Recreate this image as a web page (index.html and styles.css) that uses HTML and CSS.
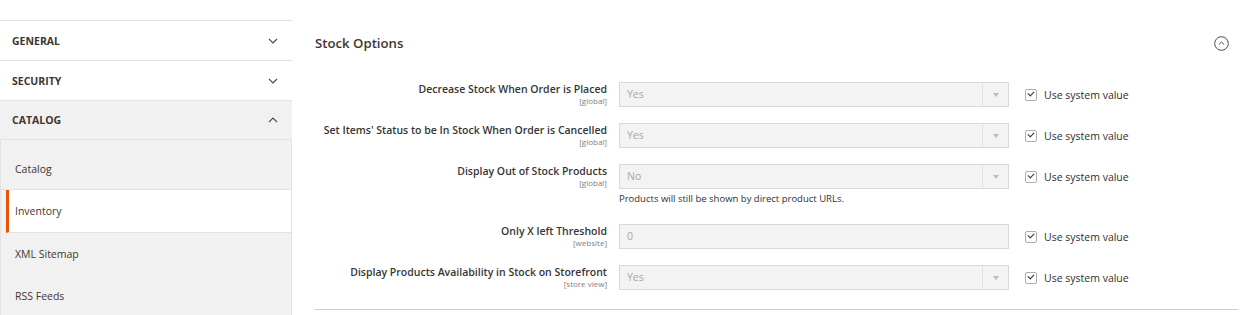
FILE: index.html
```html
<!DOCTYPE html>
<html lang="en">
<head>
  <meta charset="UTF-8">
  <meta name="viewport" content="width=device-width, initial-scale=1.0">
  <title>Configuration - Inventory</title>
  <link rel="stylesheet" href="styles.css">
</head>
<body>

<div class="page">
  <!-- Config tabs -->
  <div class="sidebar">
    <div class="tab">
      <span>General</span>
      <svg class="chev" width="10" height="6" viewBox="0 0 10 6"><polyline points="1,1 5,5 9,1"/></svg>
    </div>
    <div class="tab">
      <span>Security</span>
      <svg class="chev" width="10" height="6" viewBox="0 0 10 6"><polyline points="1,1 5,5 9,1"/></svg>
    </div>
    <div class="tab open">
      <span>Catalog</span>
      <svg class="chev" width="10" height="6" viewBox="0 0 10 6"><polyline points="1,5 5,1 9,5"/></svg>
    </div>
    <ul class="subnav">
      <li class="first">Catalog</li>
      <li class="active">Inventory</li>
      <li>XML Sitemap</li>
      <li>RSS Feeds</li>
    </ul>
  </div>

  <!-- Section content -->
  <div class="main">
    <div class="section-head">
      <span class="section-title">Stock Options</span>
      <svg class="collapse" width="15" height="15" viewBox="0 0 15 15">
        <circle cx="7.5" cy="7.5" r="6.8"/>
        <polyline points="4.8,8.6 7.5,6 10.2,8.6"/>
      </svg>
    </div>

    <div class="fields">
      <div class="row">
        <div class="label">Decrease Stock When Order is Placed<span class="scope">[global]</span></div>
        <div class="control"><div class="select">Yes<span class="arrow"></span></div></div>
        <label class="inherit"><span class="check"></span>Use system value</label>
      </div>

      <div class="row">
        <div class="label">Set Items' Status to be In Stock When Order is Cancelled<span class="scope">[global]</span></div>
        <div class="control"><div class="select">Yes<span class="arrow"></span></div></div>
        <label class="inherit"><span class="check"></span>Use system value</label>
      </div>

      <div class="row">
        <div class="label">Display Out of Stock Products<span class="scope">[global]</span></div>
        <div class="control">
          <div class="select">No<span class="arrow"></span></div>
          <div class="note">Products will still be shown by direct product URLs.</div>
        </div>
        <label class="inherit"><span class="check"></span>Use system value</label>
      </div>

      <div class="row">
        <div class="label">Only X left Threshold<span class="scope">[website]</span></div>
        <div class="control"><div class="select text">0</div></div>
        <label class="inherit"><span class="check"></span>Use system value</label>
      </div>

      <div class="row">
        <div class="label">Display Products Availability in Stock on Storefront<span class="scope">[store view]</span></div>
        <div class="control"><div class="select">Yes<span class="arrow"></span></div></div>
        <label class="inherit"><span class="check"></span>Use system value</label>
      </div>
    </div>

    <div class="divider"></div>
  </div>
</div>

</body>
</html>
```

FILE: styles.css
```css
/* Global */
body {
  margin: 0;
  font-family: "Open Sans", Arial, sans-serif;
  color: #303030;
  background: #ffffff;
  overflow: hidden;
}
.page {
  display: flex;
  height: 315px;
  overflow: hidden;
}

/* Sidebar tabs */
.sidebar {
  width: 292px;
  flex-shrink: 0;
  padding-top: 20px;
}
.tab {
  display: flex;
  align-items: center;
  justify-content: space-between;
  height: 39px;
  padding: 0 14px 0 12px;
  border-top: 1px solid #e3e3e3;
  font-size: 10.5px;
  font-weight: 700;
  text-transform: uppercase;
  color: #41362f;
}
.tab.open {
  background: #f1f1f1;
  height: 38px;
}
.chev {
  fill: none;
  stroke: #514943;
  stroke-width: 1.1;
}
.subnav {
  list-style: none;
  margin: 0;
  padding: 0 0 0 5px;
  background: #f1f1f1;
  border: 1px solid #e3e3e3;
  border-bottom: none;
  height: 176px;
}
.subnav li {
  height: 42px;
  line-height: 42px;
  padding-left: 9px;
  font-size: 10.5px;
  color: #41362f;
}
.subnav li.first {
  height: 50px;
  line-height: 8px;
  padding-top: 25px;
  box-sizing: border-box;
  border-bottom: 1px solid #e3e3e3;
  margin-left: -5px;
  padding-left: 14px;
}
.subnav li.active {
  background: #ffffff;
  border-left: 3px solid #eb5202;
  padding-left: 6px;
  border-bottom: 1px solid #e3e3e3;
}

/* Main area */
.main {
  flex: 1;
  padding: 33px 14px 0 23px;
}
.section-head {
  display: flex;
  align-items: center;
  justify-content: space-between;
  height: 20px;
  padding-right: 9px;
}
.section-title {
  font-size: 13.2px;
  font-weight: 600;
  color: #41362f;
}
.collapse {
  fill: none;
  stroke: #514943;
  stroke-width: 1;
}

/* Form rows */
.fields {
  margin-top: 29px;
}
.row {
  display: grid;
  grid-template-columns: 292px 390px 1fr;
  column-gap: 12px;
  margin-bottom: 16px;
}
.label {
  text-align: right;
  white-space: nowrap;
  font-size: 10.5px;
  font-weight: 600;
  line-height: 14px;
  color: #363636;
}
.scope {
  display: block;
  font-size: 8px;
  font-weight: 400;
  line-height: 10px;
  color: #808080;
}
.select {
  position: relative;
  height: 23px;
  line-height: 23px;
  padding-left: 7px;
  background: #f3f3f3;
  border: 1px solid #d9d9d9;
  font-size: 10.5px;
  color: #a8a8a8;
}
.arrow {
  position: absolute;
  top: 0;
  right: 0;
  width: 25px;
  height: 23px;
  border-left: 1px solid #e2e2e2;
}
.arrow::after {
  content: "";
  position: absolute;
  left: 10px;
  top: 10px;
  border-left: 3px solid transparent;
  border-right: 3px solid transparent;
  border-top: 4px solid #bdbdbd;
}
.note {
  margin-top: 3px;
  font-size: 9.5px;
  line-height: 14px;
  color: #303030;
  margin-bottom: 2px;
}
.inherit {
  display: flex;
  align-items: center;
  height: 25px;
  padding-left: 4px;
  font-size: 10.5px;
  color: #303030;
}
.check {
  position: relative;
  width: 10px;
  height: 10px;
  margin-right: 7px;
  border: 1px solid #adadad;
  border-radius: 2px;
  background: #ffffff;
}
.check::after {
  content: "";
  position: absolute;
  left: 2px;
  top: 1px;
  width: 5px;
  height: 3px;
  border-left: 1.5px solid #303030;
  border-bottom: 1.5px solid #303030;
  transform: rotate(-45deg);
}
.divider {
  margin-top: 19px;
  border-top: 1px solid #cccccc;
}
```
